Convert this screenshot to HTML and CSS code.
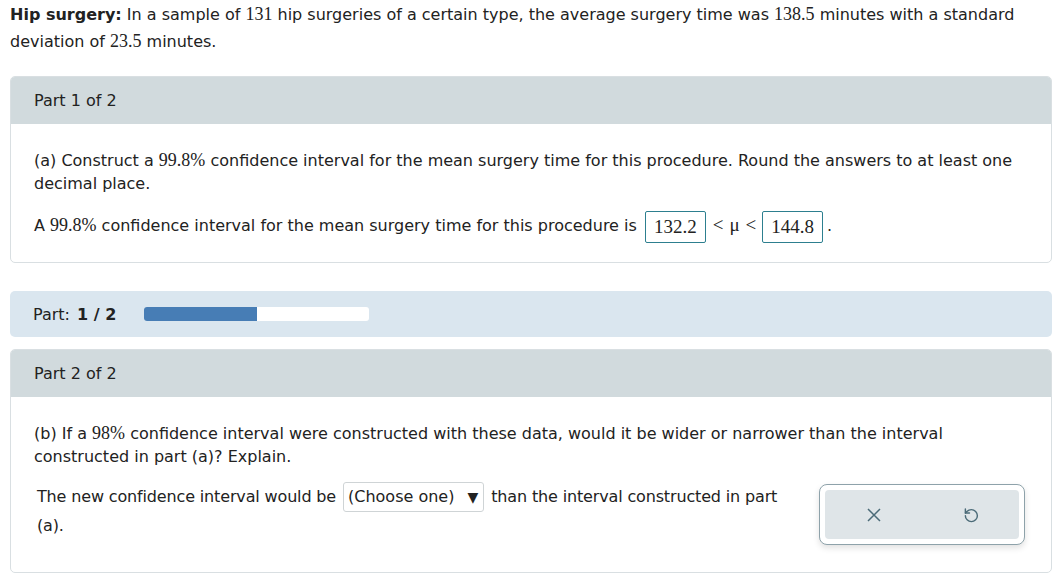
FILE: index.html
```html
<!DOCTYPE html>
<html>
<head>
<meta charset="utf-8">
<link rel="stylesheet" href="styles.css">
</head>
<body>
<div class="page">
  <p class="intro"><b>Hip surgery:</b> In a sample of <span class="num">131</span> hip surgeries of a certain type, the average surgery time was <span class="num">138.5</span> minutes with a standard deviation of <span class="num">23.5</span> minutes.</p>

  <section class="card card1">
    <div class="card-head">Part 1 of 2</div>
    <div class="card-body">
      <p class="q">(a) Construct a <span class="num">99.8%</span> confidence interval for the mean surgery time for this procedure. Round the answers to at least one decimal place.</p>
      <p class="ans">A <span class="num">99.8%</span> confidence interval for the mean surgery time for this procedure is <span class="box">132.2</span><span class="sym">&lt;</span><span class="sym mu">μ</span><span class="sym">&lt;</span><span class="box">144.8</span>.</p>
    </div>
  </section>

  <div class="progress">
    <span class="plabel">Part: <b class="pnum">1 / 2</b></span>
    <div class="bar"><div class="fill" style="width:50%"></div></div>
  </div>

  <section class="card card2">
    <div class="card-head">Part 2 of 2</div>
    <div class="card-body">
      <p class="q">(b) If a <span class="num">98%</span> confidence interval were constructed with these data, would it be wider or narrower than the interval constructed in part (a)? Explain.</p>
      <div class="row">
        <p class="ans2">The new confidence interval would be <span class="select">(Choose one) <span class="tri">▼</span></span> than the interval constructed in part (a).</p>
        <div class="tools">
          <div class="tools-inner">
            <span class="tool">
              <svg width="16" height="16" viewBox="0 0 16 16"><path d="M2 2 L14 14 M14 2 L2 14" stroke="#4b6b78" stroke-width="1.5" fill="none"/></svg>
            </span>
            <span class="tool">
              <svg width="18" height="19" viewBox="0 0 24 25"><path d="M4.5 14a8 8 0 1 0 8-8 8.7 8.7 0 0 0-6 2.4L4.5 10.5" stroke="#4b6b78" stroke-width="1.9" fill="none" stroke-linecap="round" stroke-linejoin="round"/><path d="M4.5 5v5.5h5.5" stroke="#4b6b78" stroke-width="1.9" fill="none" stroke-linecap="round" stroke-linejoin="round"/></svg>
            </span>
          </div>
        </div>
      </div>
    </div>
  </section>
</div>
</body>
</html>
```
FILE: styles.css
```css
html, body { margin: 0; padding: 0; background: #fff; }
body {
  font-family: "DejaVu Sans", Verdana, sans-serif;
  font-size: 16px;
  color: #222;
}
.page { padding: 1px 9px 0 10px; }
p { margin: 0; }
.num { font-family: "Liberation Serif", "Times New Roman", serif; font-size: 18px; }
.intro { line-height: 27px; }
.intro b { font-weight: bold; }

.card {
  border: 1px solid #d9dfe2;
  border-radius: 5px;
  overflow: hidden;
}
.card1 { margin-top: 21px; }
.card-head {
  background: #d1dadd;
  height: 47px;
  line-height: 48px;
  padding-left: 23px;
  color: #222;
}
.card-body { padding: 25px 23px 0 23px; }
.card1 .card-body { padding-bottom: 19px; }
.q { line-height: 23px; }
.ans { margin-top: 13px; line-height: 34px; }
.box {
  display: inline-block;
  font-family: "Liberation Serif", "Times New Roman", serif;
  font-size: 19px;
  border: 1px solid #2d7f8f;
  border-radius: 2px;
  padding: 0 8px;
  line-height: 30px;
  margin: 0 4px 0 3px;
  vertical-align: middle;
}
.sym { font-family: "Liberation Serif", "Times New Roman", serif; font-size: 19px; margin: 0 3px; }

.progress {
  margin-top: 28px;
  background: #dae6ef;
  border-radius: 5px;
  height: 46px;
  display: flex;
  align-items: center;
  padding-left: 23px;
}
.plabel { width: 110px; }
.pnum { font-weight: bold; margin-left: 2px; }
.bar {
  width: 225px; height: 14px;
  background: #fff;
  border-radius: 3px;
  overflow: hidden;
  margin-left: 1px;
}
.fill { height: 100%; background: #477db5; }

.card2 { margin-top: 12px; height: 222px; }
.card2 .card-body { padding-top: 25px; }
.row { display: flex; margin-top: 14px; align-items: flex-start; }
.ans2 { width: 760px; line-height: 28px; padding-left: 3px; letter-spacing: -0.15px; }
.select {
  display: inline-block;
  border: 1px solid #cfd4d6;
  border-radius: 3px;
  padding: 0 5px 0 4px;
  line-height: 28px;
  margin: 0 2px;
  letter-spacing: 0;
}
.tri { font-size: 14px; margin-left: 8px; }
.tools {
  margin-left: 22px;
  margin-top: 2px;
  border: 1px solid #8ea2aa;
  border-radius: 8px;
  background: #fff;
  box-shadow: 0 3px 6px rgba(0,0,0,0.12);
  padding: 5px;
  box-sizing: border-box;
  width: 206px; height: 61px;
  flex: none;
}
.tools-inner {
  background: #dfe5e8;
  border-radius: 4px;
  height: 100%;
  display: flex;
}
.tool { flex: 1; display: flex; align-items: center; justify-content: center; }
```
